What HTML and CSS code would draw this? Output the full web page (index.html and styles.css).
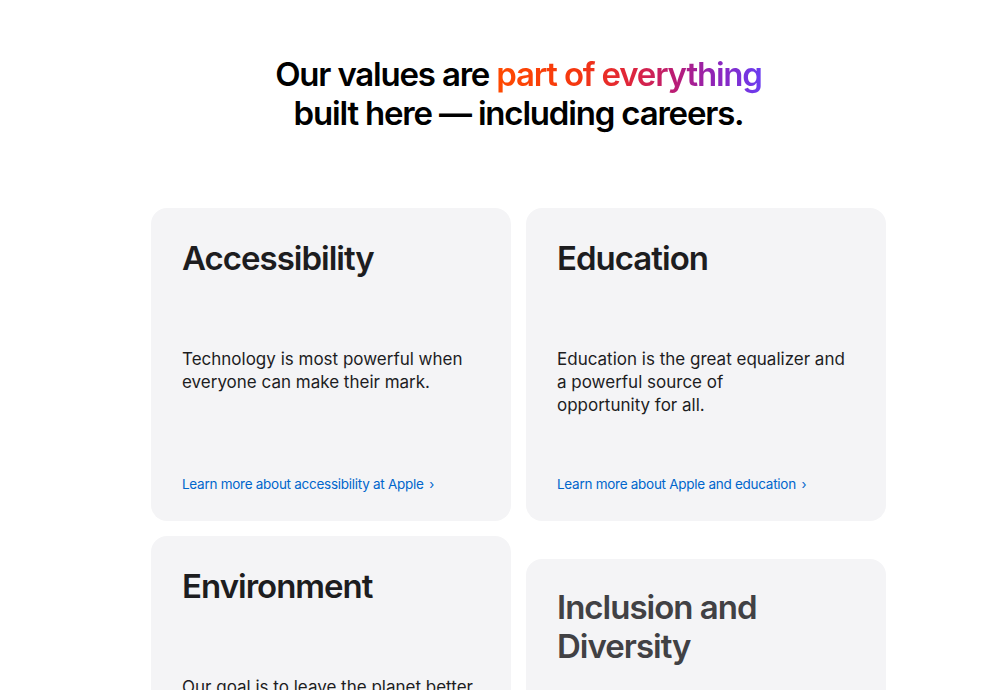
FILE: index.html
```html
<!DOCTYPE html>
<html lang="en">
<head>
<meta charset="utf-8">
<title>Our values</title>
<link rel="stylesheet" href="styles.css">
</head>
<body>
<main class="page">
  <h2 class="headline">Our values are <span class="grad">part of everything</span><br>built here — including careers.</h2>
  <div class="grid">
    <div class="col">
      <section class="card">
        <h3 class="card-title">Accessibility</h3>
        <p class="card-text">Technology is most powerful when everyone can make their mark.</p>
        <a class="card-link" href="#">Learn more about accessibility at Apple <span class="chev">›</span></a>
      </section>
      <section class="card">
        <h3 class="card-title">Environment</h3>
        <p class="card-text">Our goal is to leave the planet better than we found it.</p>
        <a class="card-link" href="#">Learn more about Apple and the environment <span class="chev">›</span></a>
      </section>
    </div>
    <div class="col">
      <section class="card">
        <h3 class="card-title">Education</h3>
        <p class="card-text">Education is the great equalizer and<br>a powerful source of<br>opportunity for all.</p>
        <a class="card-link" href="#">Learn more about Apple and education <span class="chev">›</span></a>
      </section>
      <section class="card card-fade">
        <h3 class="card-title">Inclusion and<br>Diversity</h3>
        <p class="card-text">We're committed to an inclusive culture.</p>
        <a class="card-link" href="#">Learn more about inclusion and diversity <span class="chev">›</span></a>
      </section>
    </div>
  </div>
</main>
</body>
</html>
```
FILE: styles.css
```css
* { box-sizing: border-box; }
html, body { margin: 0; padding: 0; background: #fff; }
body {
  font-family: Inter, "Noto Sans", "Liberation Sans", sans-serif;
  color: #1d1d1f;
  overflow: hidden;
  height: 690px;
  padding-left: 35px;
}
.page {
  width: 735px;
  margin: 0 auto;
  padding-top: 55px;
}
.headline {
  margin: 0;
  text-align: center;
  font-size: 33px;
  line-height: 39px;
  font-weight: 600;
  letter-spacing: -0.036em;
  color: #000;
}
.grad {
  background: linear-gradient(90deg, #ff4a00 0%, #f5370f 30%, #e0263a 50%, #b81c78 68%, #8f24b8 82%, #6a3cf2 100%);
  -webkit-background-clip: text;
  background-clip: text;
  color: transparent;
}
.grid {
  display: grid;
  grid-template-columns: 360px 360px;
  column-gap: 15px;
  margin-top: 75px;
}
.col {
  display: flex;
  flex-direction: column;
  gap: 15px;
}
.col:last-child .card-fade { margin-top: 23px; }
.card {
  background: #f4f4f6;
  border-radius: 16px;
  padding: 31px 31px 27px;
  min-height: 313px;
  display: flex;
  flex-direction: column;
}
.card-title {
  margin: 0;
  font-size: 33px;
  line-height: 39px;
  font-weight: 600;
  letter-spacing: -0.03em;
  color: #1d1d1f;
}
.card-text {
  margin: 70px 0 0;
  font-size: 17px;
  line-height: 23px;
  font-weight: 400;
  letter-spacing: 0;
  color: #1d1d1f;
}
.card-link {
  margin-top: auto;
  font-size: 13.5px;
  line-height: 20px;
  color: #0066cc;
  text-decoration: none;
  letter-spacing: -0.02em;
}
.chev { font-size: 13px; margin-left: 2px; }
.card-fade .card-title { color: #414144; margin-top: -2px; }
.card-fade .card-text { color: #414144; }
```
